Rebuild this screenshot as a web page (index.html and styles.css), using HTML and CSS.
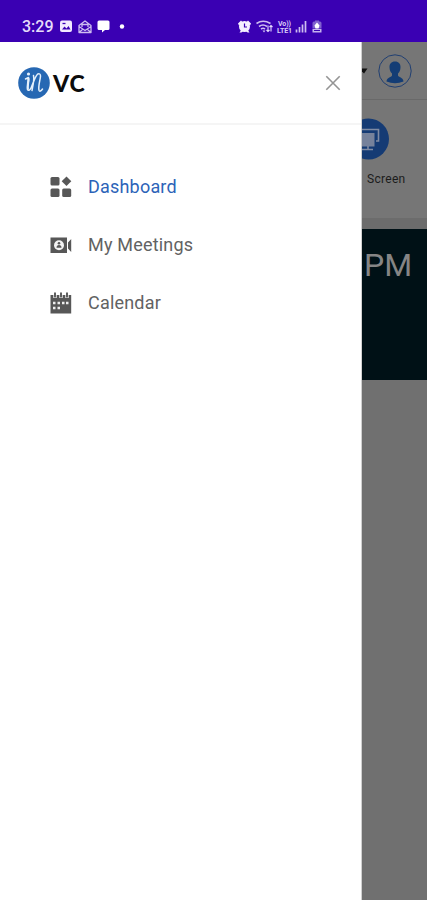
FILE: index.html
```
<!DOCTYPE html>
<html lang="en">
<head>
<meta charset="utf-8">
<title>VC</title>
<link rel="stylesheet" href="styles.css">
</head>
<body>
<header class="status">
  <span class="clock">3:29</span>
  <svg class="status-left" width="66" height="16" viewBox="0 0 66 16">
    <rect x="0" y="1.500" width="12" height="11.500" rx="2" fill="#f3eaff"/>
    <path d="M2 10.500l2.500-3 2 2 2-2.500 2 3.500z" fill="#3a00b3"/><path d="M2.500 4.500h3" stroke="#3a00b3" stroke-width="1.300"/>
    <path d="M19 6.500l6-4.500 6 4.500v7H19z M19 7.500l6 4 6-4M22 8V5.500h6V8M19 13.500l4-3.500M31 13.500l-4-3.500" fill="none" stroke="#cdbcf0" stroke-width="1.300" stroke-linejoin="round"/>
    <path d="M39 1.500h9a1.500 1.500 0 0 1 1.500 1.500v6.500a1.500 1.500 0 0 1-1.500 1.500h-3l-3 2.500v-2.500h-3a1.500 1.500 0 0 1-1.500-1.500V3A1.500 1.500 0 0 1 39 1.500z" fill="#fff"/>
    <circle cx="62" cy="7.500" r="2.200" fill="#fff"/>
  </svg>
  <svg class="status-right" width="86" height="16" viewBox="0 0 86 16">
    <g fill="#f5efff"><circle cx="6.500" cy="7.500" r="5.500"/><path d="M0 4.500l3-3 2 2-4 3zM13 4.500l-3-3-2 2 4 3zM1.500 13.500l2-3 2 1-2 2zM11.500 13.500l-2-3-2 1 2 2z"/></g>
    <path d="M6.500 4.500V8H9" fill="none" stroke="#3a00b3" stroke-width="1.200"/>
    <g fill="none" stroke="#cdbcf0" stroke-width="1.600"><path d="M18.500 4.500q6.500-4.500 14 0M21 7.500q4-3 8 0M23 10q2-1.500 4 0"/></g>
    <path d="M24.500 11.500l1.500 2 1.500-2z" fill="#cdbcf0"/>
    <path d="M30 6.500v6m-1.500-1.500l1.500 1.500 1.500-1.500M33 12.500v-6m-1.500 1.500L33 6.500 34.500 8" fill="none" stroke="#e5daff" stroke-width="1.100"/>
    <text class="volte" x="40" y="7" textLength="13">Vo))</text>
    <text class="volte" x="39" y="13.500" textLength="15">LTE1</text>
    <path d="M58.500 10.500v3M61.500 8v5.500M64.500 5.500v8M67.500 2v11.500" stroke="#cdbcf0" stroke-width="1.700"/>
    <path d="M74.500 4a1.500 1.500 0 0 1 1.500-1.500h1V1.500h4v1h1A1.500 1.500 0 0 1 83.500 4v5.500h-9z" fill="#8060cf"/>
    <path d="M79 3.500l2.500 3-1 3h-3l-1-3z" fill="#fff"/><path d="M74.500 10h9v3.500h-9z" fill="#c5b2ee"/><path d="M76 11.500h6" stroke="#3a00b3"/>
  </svg>
</header>
<div class="shell">
  <aside class="drawer">
    <div class="drawer-head">
      <svg width="32" height="32" viewBox="0 0 32 32">
        <circle cx="16" cy="16" r="15.800" fill="#2768b3"/>
        <path d="M7.500 12l3-1.500c.8 3-1.300 8.500-.8 12 .4 1.500 2 1 3.300-1.500C15 17 17 9.500 19.500 7.200c1.700-1.200 3.200 0 3 2-.3 4-2.500 10-1.500 14 .6 1.600 2 1 3.500-1.200M15.500 8.500c1 4-.5 10-1.500 15" fill="none" stroke="#e5f0fb" stroke-width="1.500" stroke-linecap="round" stroke-linejoin="round"/>
        <path d="M10.300 11c.6 3-1.200 7-.5 11.500" fill="none" stroke="#e5f0fb" stroke-width="2.200"/>
        <circle cx="10.500" cy="7" r="1.600" fill="#e5f0fb"/>
      </svg>
      <span class="brand">VC</span>
      <svg class="close" width="16" height="16" viewBox="0 0 16 16"><path d="M1.300 1.300l13.400 13.400M14.700 1.300L1.300 14.700" stroke="#949494" stroke-width="1.600"/></svg>
    </div>
    <nav class="menu">
      <a class="item active">
        <svg width="22" height="22" viewBox="0 0 22 22" fill="#575757"><rect x=".5" y="1" width="9" height="8.500" rx="1.500"/><path d="M16.500.5l4.800 4.700-4.800 4.700-4.800-4.700z"/><rect x=".5" y="12.500" width="9" height="8.500" rx="1.500"/><rect x="12.200" y="12.500" width="9" height="8.500" rx="1.500"/></svg>
        <span>Dashboard</span>
      </a>
      <a class="item">
        <svg width="22" height="22" viewBox="0 0 22 22"><path d="M.5 3.500h16.500v15.500H.5zM18 8.500l3.200-3.500v13L18 14.500z" fill="#575757"/><circle cx="9" cy="11.200" r="5" fill="#f4f4f4"/><circle cx="9" cy="9.200" r="1.300" fill="#575757"/><path d="M6.500 13.700q0-2.700 2.500-2.700t2.500 2.700z" fill="#575757"/></svg>
        <span>My Meetings</span>
      </a>
      <a class="item">
        <svg width="22" height="22" viewBox="0 0 22 22"><path d="M.5 3h20.700v18.500H.5z" fill="#575757"/><path d="M5 0v6M11 0v6M17 0v6" stroke="#fff" stroke-width="3.300"/><path d="M5 .5v5M11 .5v5M17 .5v5" stroke="#575757" stroke-width="1.900"/><path d="M7.500 11H10M12 11h2.500M16 11h2.500M3 11h2.500M3 16h2.500M7.500 16H10" stroke="#eee" stroke-width="2.500"/></svg>
        <span>Calendar</span>
      </a>
    </nav>
  </aside>
  <main class="page">
    <div class="topbar">
      <svg class="caret" width="6" height="6" viewBox="0 0 6 6"><path d="M-3 .5h8.500L2 5.500z" fill="#111"/></svg>
      <svg class="avatar" width="34" height="34" viewBox="0 0 34 34"><circle cx="17" cy="17" r="16.200" fill="none" stroke="#203f72" stroke-width="1"/><path d="M17 7.500c3.700 0 5.700 2.500 5.500 6-.1 3-1.300 4.800-2.500 6v2c0 1.500 5.500 2 5.500 6q-8.500 3.500-17 0c0-4 5.500-4.500 5.500-6v-2c-1.200-1.200-2.400-3-2.500-6-.2-3.500 1.800-6 5.500-6z" fill="#143d75"/></svg>
    </div>
    <div class="actions">
      <svg class="screen" width="28" height="42" viewBox="14 0 28 42"><circle cx="20.500" cy="21" r="20.500" fill="#153b74"/><path d="M10 11.500h20.500V23H28" fill="none" stroke="#7f8ba3" stroke-width="1.600"/><path d="M10 15h16.500v13.500H10z" fill="#76829b"/><path d="M20 28v3.500M14 31.500h11" stroke="#7f8ba3" stroke-width="1.600"/></svg>
      <span class="label">Screen</span>
    </div>
    <div class="time">PM</div>
  </main>
</div>
</body>
</html>
```
FILE: styles.css
```
* { box-sizing: border-box; }
body {
  margin: 0;
  height: 900px;
  overflow: hidden;
  display: flex;
  flex-direction: column;
  font-family: Roboto, sans-serif;
  background: #fff;
}
.status {
  height: 42px;
  flex: none;
  display: flex;
  align-items: center;
  padding: 11px 0 0 22px;
  background: #3a00b3;
}
.clock { width: 38px; font-size: 16px; line-height: 20px; font-weight: 500; color: #e6dcfa; }
.status-right { margin-left: 112px; }
.volte { font: 700 7px Roboto, sans-serif; fill: #d9ccf7; }
.shell { flex: 1; display: flex; min-height: 0; }
.drawer { width: 362px; flex: none; background: #fff; border-right: 1px solid #d0d0d0; }
.drawer-head {
  height: 83px;
  display: flex;
  align-items: center;
  padding: 1px 20px 0 18px;
  border-bottom: 2px solid #f5f5f5;
}
.brand { margin-left: 3px; font: 900 23px/30px Lato, sans-serif; letter-spacing: 1px; color: #0b0b0b; }
.close { margin-left: auto; }
.menu { padding: 33px 0 0 50px; }
.item {
  height: 58px;
  display: flex;
  align-items: center;
  gap: 16px;
  font-size: 18px;
  line-height: 22px;
  letter-spacing: .2px;
  color: #626262;
}
.item.active { color: #2c63b8; }
.page { flex: 1; min-width: 0; overflow: hidden; background: #707070; }
.topbar {
  height: 58px;
  display: flex;
  align-items: center;
  background: #767676;
  border-bottom: 1px solid #696969;
}
.avatar { margin-left: 10px; flex: none; }
.actions {
  height: 129px;
  display: flex;
  flex-direction: column;
  align-items: flex-start;
  padding-top: 18px;
  background: #767676;
  border-bottom: 11px solid #6c6c6c;
}
.label { margin: 12px 0 0 5px; font-size: 12px; line-height: 14px; letter-spacing: .3px; color: #1c1c1c; }
.time {
  height: 151px;
  padding: 17px 0 0 2px;
  background: #001116;
  font-size: 32px;
  line-height: 38px;
  color: #858585;
}
```
